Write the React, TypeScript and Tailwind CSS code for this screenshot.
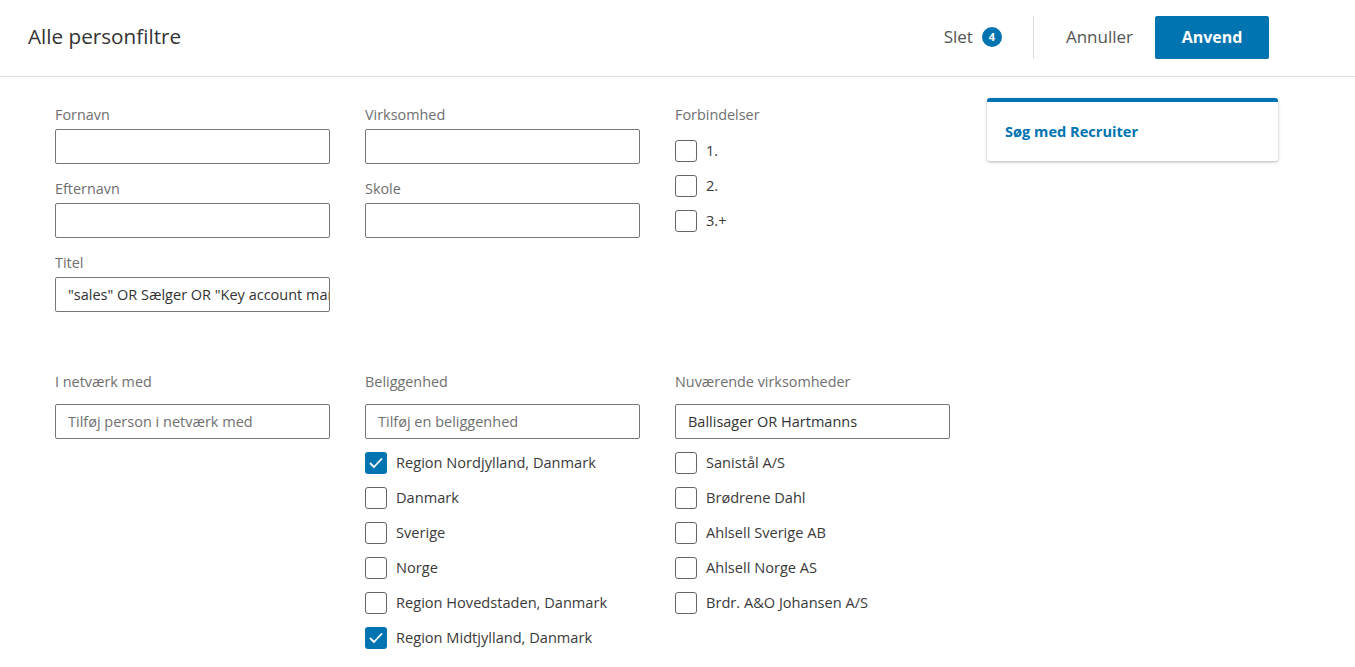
import type { ReactNode } from 'react';

const font = { fontFamily: '"Open Sans", "Noto Sans", sans-serif' };

function Field({ label, value, placeholder }: { label: string; value?: string; placeholder?: string }) {
  return (
    <div>
      <div className="h-5 text-[14.4px] leading-5 text-[#6f6f6f]">{label}</div>
      <div className="mt-[4px] h-[35px] border border-[#777] rounded-[2px] flex items-center px-3 overflow-hidden">
        {value ? (
          <span className="text-[14.5px] text-[#333] whitespace-nowrap">{value}</span>
        ) : placeholder ? (
          <span className="text-[14.5px] text-[#707070] whitespace-nowrap">{placeholder}</span>
        ) : null}
      </div>
    </div>
  );
}

function Check({ label, checked = false }: { label: string; checked?: boolean }) {
  return (
    <label className="flex items-center gap-[9px] h-[22px]">
      {checked ? (
        <span className="w-[22px] h-[22px] rounded-[3px] bg-[#0073b1] flex items-center justify-center shrink-0">
          <svg width="16" height="16" viewBox="0 0 16 16" fill="none">
            <path d="M2.5 8.5l3.5 3.5 7.5-8" stroke="white" strokeWidth="1.8" strokeLinecap="round" strokeLinejoin="round" />
          </svg>
        </span>
      ) : (
        <span className="w-[22px] h-[22px] rounded-[3px] border border-[#666] bg-white shrink-0" />
      )}
      <span className="text-[14.6px] text-[#3a3a3a] whitespace-nowrap">{label}</span>
    </label>
  );
}

function CheckList({ children }: { children: ReactNode }) {
  return <div className="flex flex-col gap-[13px]">{children}</div>;
}

function SearchField({ label, text, filled = false }: { label: string; text: string; filled?: boolean }) {
  return (
    <>
      <div className="h-5 text-[14.4px] leading-5 text-[#6f6f6f]">{label}</div>
      <div className="mt-[12px] h-[35px] border border-[#777] rounded-[2px] flex items-center px-3">
        <span className={filled ? 'text-[14.5px] text-[#333]' : 'text-[14.5px] text-[#707070]'}>{text}</span>
      </div>
    </>
  );
}

export default function App() {
  return (
    <div className="min-h-screen bg-white" style={font}>
      {/* Header */}
      <header className="h-[77px] border-b border-[#e0e0e0] flex items-center pl-[28px] pr-[86px] pb-[2px]">
        <h1 className="text-[20.7px] text-[#333]">Alle personfiltre</h1>
        <div className="ml-auto flex items-center">
          <button className="flex items-center gap-[9px] text-[17px] text-[#555]">
            Slet
            <span className="w-[20px] h-[20px] rounded-full bg-[#0073b1] text-white text-[11px] font-bold flex items-center justify-center">
              4
            </span>
          </button>
          <div className="ml-[31px] mr-[32px] w-px h-[43px] bg-[#dcdcdc]" />
          <button className="text-[17px] text-[#555]">Annuller</button>
          <button className="ml-[22px] w-[114px] h-[43px] bg-[#0073b1] rounded-[2px] text-white font-bold text-[16px]">
            Anvend
          </button>
        </div>
      </header>

      {/* Body */}
      <div className="flex pt-[21px] pl-[55px]">
        <div className="pt-[7px] w-[895px]">
          <div className="grid grid-cols-[275px_275px_275px] gap-x-[35px]">
            <div className="flex flex-col gap-[15px]">
              <Field label="Fornavn" />
              <Field label="Efternavn" />
              <Field label="Titel" value={'"sales" OR Sælger OR "Key account manager"'} />
            </div>
            <div className="flex flex-col gap-[15px]">
              <Field label="Virksomhed" />
              <Field label="Skole" />
            </div>
            <div>
              <div className="h-5 text-[14.4px] leading-5 text-[#6f6f6f]">Forbindelser</div>
              <div className="mt-[15px]">
                <CheckList>
                  <Check label="1." />
                  <Check label="2." />
                  <Check label="3.+" />
                </CheckList>
              </div>
            </div>
          </div>

          <div className="mt-[60px] grid grid-cols-[275px_275px_275px] gap-x-[35px]">
            <div>
              <SearchField label="I netværk med" text="Tilføj person i netværk med" />
            </div>
            <div>
              <SearchField label="Beliggenhed" text="Tilføj en beliggenhed" />
              <div className="mt-[13px]">
                <CheckList>
                  <Check label="Region Nordjylland, Danmark" checked />
                  <Check label="Danmark" />
                  <Check label="Sverige" />
                  <Check label="Norge" />
                  <Check label="Region Hovedstaden, Danmark" />
                  <Check label="Region Midtjylland, Danmark" checked />
                </CheckList>
              </div>
            </div>
            <div>
              <SearchField label="Nuværende virksomheder" text="Ballisager OR Hartmanns" filled />
              <div className="mt-[13px]">
                <CheckList>
                  <Check label="Sanistål A/S" />
                  <Check label="Brødrene Dahl" />
                  <Check label="Ahlsell Sverige AB" />
                  <Check label="Ahlsell Norge AS" />
                  <Check label="Brdr. A&O Johansen A/S" />
                </CheckList>
              </div>
            </div>
          </div>
        </div>

        <aside className="ml-[37px] w-[291px] h-[63px] bg-white border-t-4 border-[#0073b1] rounded-[3px] shadow-[0_1px_3px_rgba(0,0,0,0.3)] flex items-center pl-[18px]">
          <span className="text-[14.6px] font-bold text-[#0073b1]">Søg med Recruiter</span>
        </aside>
      </div>
    </div>
  );
}
